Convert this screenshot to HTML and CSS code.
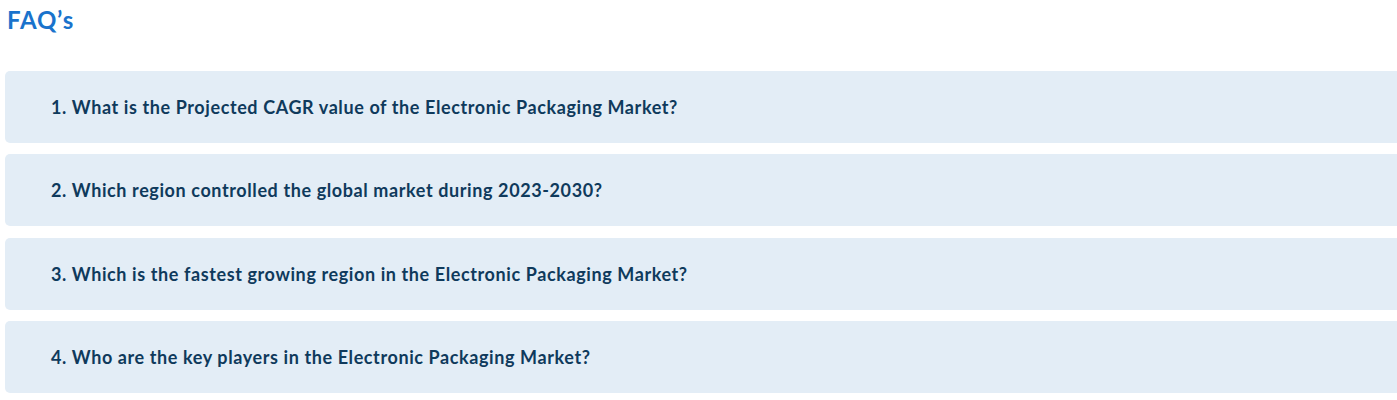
FILE: index.html
```html
<!DOCTYPE html>
<html lang="en">
<head>
<meta charset="utf-8">
<title>FAQ's</title>
<link rel="stylesheet" href="styles.css">
</head>
<body>
<section class="faq">
  <h2 class="faq-title">FAQ’s</h2>
  <div class="faq-list">
    <div class="faq-item"><h3 class="faq-q">1. What is the Projected CAGR value of the Electronic Packaging Market?</h3></div>
    <div class="faq-item"><h3 class="faq-q">2. Which region controlled the global market during 2023-2030?</h3></div>
    <div class="faq-item"><h3 class="faq-q">3. Which is the fastest growing region in the Electronic Packaging Market?</h3></div>
    <div class="faq-item"><h3 class="faq-q">4. Who are the key players in the Electronic Packaging Market?</h3></div>
  </div>
</section>
</body>
</html>
```

FILE: styles.css
```css
html, body {
  margin: 0;
  padding: 0;
  overflow: hidden;
  background: #ffffff;
}
body {
  font-family: Lato, "Noto Sans", sans-serif;
}
.faq {
  padding: 6px 0 0 5px;
}
.faq-title {
  margin: 0 0 0 2px;
  font-size: 24px;
  line-height: 28px;
  font-weight: 700;
  letter-spacing: 0.8px;
  color: #1a73cc;
}
.faq-list {
  margin-top: 37px;
  display: flex;
  flex-direction: column;
  gap: 11.4px;
  width: 1410px;
}
.faq-item {
  background: #e3edf6;
  border-radius: 5px;
  height: 72px;
  display: flex;
  align-items: center;
  padding-left: 46px;
}
.faq-q {
  margin: 0;
  font-size: 18px;
  line-height: 22px;
  font-weight: 700;
  letter-spacing: 0.6px;
  color: #0f3a5c;
}
```
